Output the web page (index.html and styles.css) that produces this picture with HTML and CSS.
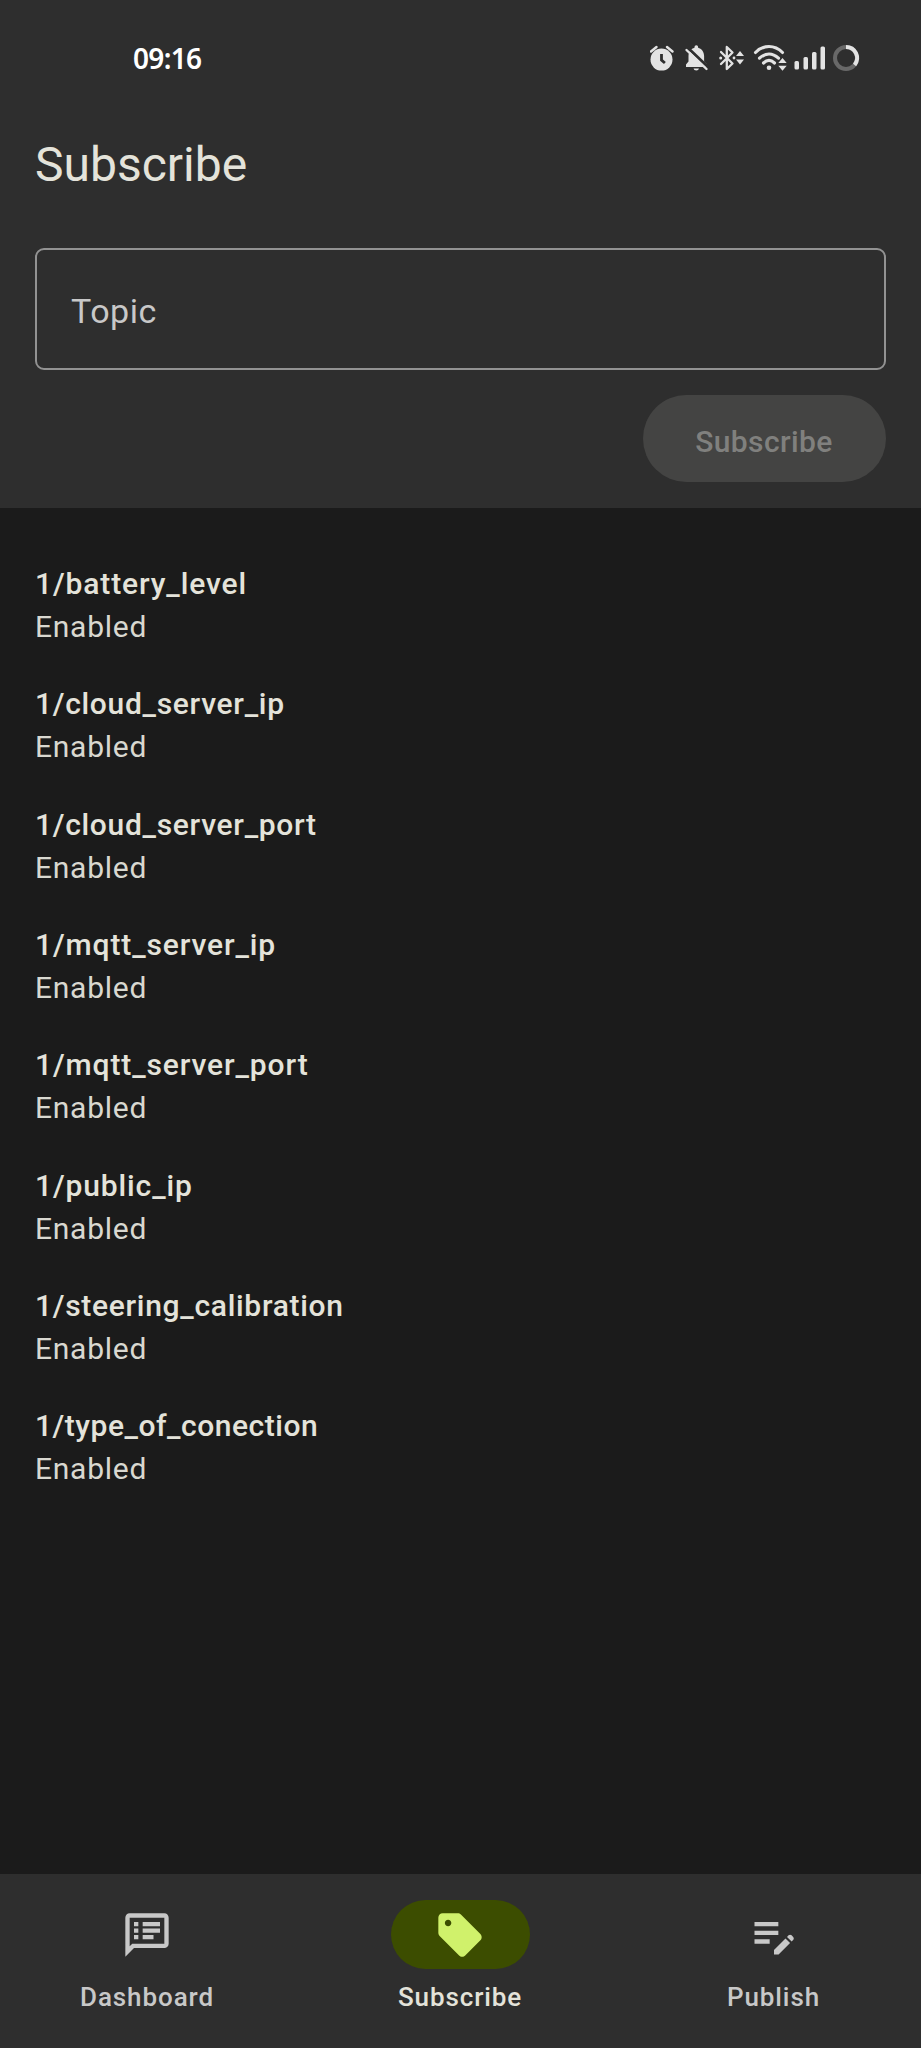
FILE: index.html
```html
<!DOCTYPE html>
<html lang="en">
<head>
<meta charset="utf-8">
<title>Subscribe</title>
<link rel="stylesheet" href="styles.css">
</head>
<body>
<div class="screen">
  <header class="top">
    <div class="status">
      <span class="clock">09:16</span>
      <svg class="status-icons" width="212" height="28" viewBox="0 0 212 28">
        <g fill="#e3e3e3">
          <circle cx="11.5" cy="15.6" r="11"/>
          <path d="M1 7.500 6.500 3M22.500 7.500 17 3" stroke="#e3e3e3" stroke-width="2.400" stroke-linecap="round" fill="none"/>
          <path d="M11.500 10v6l3.400 3" stroke="#2e2e2e" stroke-width="2.800" fill="none"/>
          <path d="M36 23v-2.500l2.500-3V12c0-4.500 2.700-7.500 6-8.300V3a1.800 1.800 0 0 1 3.600 0v.7c3.300.8 6 3.800 6 8.300v5.500L57 20.500V23zM43.500 24.500h5.500a2.800 2.500 0 0 1-5.500 0z"/>
          <path d="M37.500 3.500 59 24" stroke="#2e2e2e" stroke-width="3"/>
          <path d="M36.500 6 56.500 25" stroke="#e3e3e3" stroke-width="2.400" stroke-linecap="round"/>
          <path d="M71 8 82.500 19.500 76.800 25V3l5.700 5.500L71 20" stroke="#e3e3e3" stroke-width="2.300" fill="none" stroke-linejoin="round" stroke-linecap="round"/>
          <circle cx="70.700" cy="14" r="1.500"/><circle cx="84" cy="14" r="1.400"/>
          <path d="M86 12l4-5 4 5zM86 15.500l4 5 4-5z"/>
          <path d="M105.500 8.500c8-8 19-8 27 0M109.500 14.200c6-5.500 13-5.500 19 0M113.500 19c3.500-3.200 7.500-3.200 11 0" stroke="#e3e3e3" stroke-width="3.100" fill="none" stroke-linecap="round"/>
          <circle cx="119" cy="23.700" r="2.300"/>
          <path d="M128.300 19l4.200-5 4.200 5zM128.300 21.800l4.200 5 4.200-5z"/>
          <rect x="144.500" y="17" width="4.500" height="8.500" rx="1.500"/>
          <rect x="153.500" y="13" width="4.500" height="12.500" rx="1.500"/>
          <rect x="162" y="8" width="4.500" height="17.500" rx="1.500"/>
          <rect x="170.500" y="2.500" width="4.500" height="23" rx="1.500"/>
        </g>
        <circle cx="196" cy="14" r="11" fill="none" stroke="#686868" stroke-width="4"/>
        <path d="M196 3a11 11 0 0 1 8.600 17.900" fill="none" stroke="#e3e3e3" stroke-width="4"/>
      </svg>
    </div>
    <h1 class="title">Subscribe</h1>
    <div class="field">Topic</div>
    <div class="actions"><button class="button" disabled>Subscribe</button></div>
  </header>
  <main class="list">
    <div class="item"><div class="name wide">1/battery_level</div><div class="state">Enabled</div></div>
    <div class="item"><div class="name">1/cloud_server_ip</div><div class="state">Enabled</div></div>
    <div class="item"><div class="name">1/cloud_server_port</div><div class="state">Enabled</div></div>
    <div class="item"><div class="name wide">1/mqtt_server_ip</div><div class="state">Enabled</div></div>
    <div class="item"><div class="name wide">1/mqtt_server_port</div><div class="state">Enabled</div></div>
    <div class="item"><div class="name wide">1/public_ip</div><div class="state">Enabled</div></div>
    <div class="item"><div class="name">1/steering_calibration</div><div class="state">Enabled</div></div>
    <div class="item"><div class="name snug">1/type_of_conection</div><div class="state">Enabled</div></div>
  </main>
  <nav class="nav">
    <a class="tab">
      <span class="pill"><svg class="icon" viewBox="0 0 24 24"><path fill-rule="evenodd" d="M4 2h16c1.100 0 2 .9 2 2v12c0 1.100-.9 2-2 2H6l-4 4V4c0-1.100.9-2 2-2zm0 15.200L5.200 16H20V4H4z"/><path d="M6 6h2v2H6zM6 9h2v2H6zM6 12h2v2H6zM10 6h8v2h-8zM10 9h8v2h-8zM10 12h5v2h-5z"/></svg></span>
      <span class="label">Dashboard</span>
    </a>
    <a class="tab active">
      <span class="pill"><svg class="icon" viewBox="0 0 24 24"><path d="M21.410 11.580l-9-9C12.050 2.220 11.550 2 11 2H4c-1.100 0-2 .9-2 2v7c0 .55.22 1.050.59 1.420l9 9c.36.36.86.58 1.410.58.55 0 1.050-.22 1.410-.59l7-7c.37-.36.59-.86.59-1.410 0-.55-.23-1.060-.59-1.420zM6.500 8C5.670 8 5 7.330 5 6.500S5.670 5 6.500 5 8 5.670 8 6.500 7.330 8 6.500 8z"/></svg></span>
      <span class="label">Subscribe</span>
    </a>
    <a class="tab">
      <span class="pill"><svg class="icon" viewBox="0 0 24 24"><path d="M3 10h11v2H3zM3 6h11v2H3zM3 14h7v2H3zM18.010 12.870l.71-.71c.39-.39 1.020-.39 1.410 0l.71.71c.39.39.39 1.020 0 1.410l-.71.71zM17.300 13.580l-5.300 5.300V21h2.120l5.300-5.300z"/></svg></span>
      <span class="label">Publish</span>
    </a>
  </nav>
</div>
</body>
</html>
```
FILE: styles.css
```css
* { box-sizing: border-box; }
body { margin: 0; background: #1b1b1b; }
.screen {
  width: 921px;
  height: 2048px;
  display: flex;
  flex-direction: column;
  font-family: Roboto, "Noto Sans", sans-serif;
  color: #e4e3da;
}
.top { height: 508px; background: #2e2e2e; padding: 0 35px; flex: none; }
.status {
  height: 116px;
  display: flex;
  justify-content: space-between;
  align-items: center;
  padding: 0 24px 0 98px;
}
.clock {
  font-family: "Noto Sans", sans-serif;
  font-size: 28px;
  line-height: 38px;
  font-weight: 600;
  letter-spacing: -0.7px;
  color: #fff;
}
.title { margin: 0; height: 132px; line-height: 97px; font-size: 48px; font-weight: 400; letter-spacing: 0; }
.field {
  height: 122px;
  border: 2px solid #929292;
  border-radius: 9px;
  padding: 2px 0 0 34px;
  line-height: 119px;
  font-size: 34px;
  letter-spacing: 0.5px;
  color: #c8c8c8;
}
.actions { display: flex; justify-content: flex-end; padding-top: 25px; }
.button {
  width: 243px;
  height: 87px;
  border: 0;
  padding: 5px 1px 0 0;
  border-radius: 44px;
  background: #444443;
  color: #80807e;
  font: 500 30px Roboto, sans-serif;
  letter-spacing: 0.4px;
}
.list { flex: 1; padding: 54px 35px 0; display: flex; flex-direction: column; gap: 34.350px; }
.item { height: 86px; flex: none; line-height: 43px; font-size: 30px; white-space: nowrap; }
.name { font-weight: 500; letter-spacing: 0.7px; }
.wide { letter-spacing: 0.88px; }
.snug { letter-spacing: 0.52px; }
.state { letter-spacing: 0.75px; color: #d9d8d0; }
.nav {
  height: 174px;
  flex: none;
  background: #2e2e2e;
  display: grid;
  grid-template-columns: 294px 1fr 295px;
  column-gap: 17px;
  padding-top: 26px;
}
.tab { display: flex; flex-direction: column; align-items: center; color: #c8c8c8; }
.pill { width: 139px; height: 69px; border-radius: 35px; display: flex; align-items: center; justify-content: center; }
.icon { width: 52px; height: 52px; fill: currentColor; }
.active { color: #e4e3da; }
.active .pill { background: #3c4d00; color: #d0f16b; }
.label { margin-top: 8px; font-size: 26px; line-height: 40px; font-weight: 500; letter-spacing: 0.9px; }
```
